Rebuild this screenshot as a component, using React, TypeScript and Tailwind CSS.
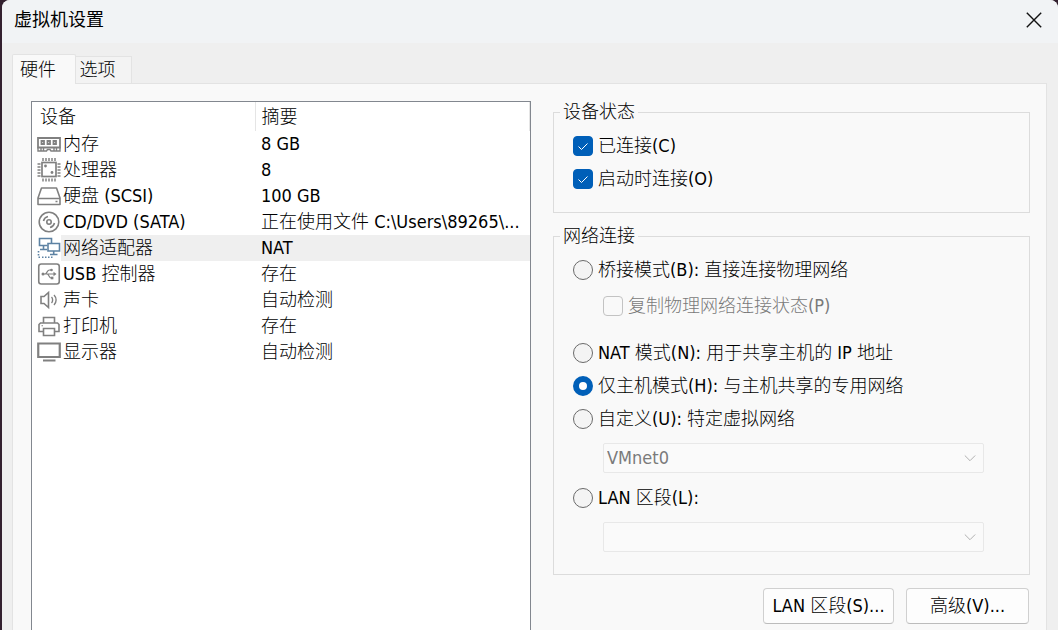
import {useState, type ReactNode} from 'react';

type IconProps = {children: ReactNode; color?: string};

function DeviceIcon({children, color = '#808080'}: IconProps) {
  return (
    <svg
      className="w-6 h-[26px] shrink-0"
      viewBox="0 0 24 26"
      fill="none"
      stroke={color}
      strokeWidth="1.6"
      aria-hidden="true"
    >
      {children}
    </svg>
  );
}

const icons = {
  memory: (
    <DeviceIcon>
      <path d="M1 7h22v9.5H1z" strokeWidth="1.8" />
      <path d="M4.500 10h2.500v3H4.500zM10.5 10h2.500v3h-2.500zM16.500 10h2.500v3h-2.500z" strokeWidth="1.8" />
      <path d="M1 16.500v3.500h8.5l1-1.5h2.5l1 1.5h9v-3.500M4 17v2.500M6.5 17v2.500M17 17v2.500M19.5 17v2.500" strokeWidth="1.4" />
    </DeviceIcon>
  ),
  cpu: (
    <DeviceIcon>
      <rect x="5" y="5.5" width="14" height="14" strokeWidth="1.7" />
      <path
        d="M6 1v3M9 1v3M12 1v3M15 1v3M18 1v3M6 21.5v3M9 21.5v3M12 21.5v3M15 21.5v3M18 21.5v3M0.5 7h3M0.5 10h3M0.5 13h3M0.5 16h3M0.5 19h3M20.5 7h3M20.5 10h3M20.5 13h3M20.5 16h3M20.5 19h3"
        strokeWidth="1.500"
      />
      <circle cx="8.5" cy="9" r="1.4" fill="#808080" stroke="none" />
      <circle cx="15" cy="15.5" r="1.4" fill="#808080" stroke="none" />
    </DeviceIcon>
  ),
  disk: (
    <DeviceIcon>
      <path d="M4.5 5h15L23 15v6.500H1V15z" strokeLinejoin="round" />
      <path d="M1 15.500h22" />
      <path d="M18.500 18.500h2" />
    </DeviceIcon>
  ),
  cd: (
    <DeviceIcon>
      <circle cx="12" cy="13" r="9.8" />
      <circle cx="12" cy="13" r="2.200" strokeWidth="1.6" />
      <path d="M6.500 12a6 6 0 0 1 4.500-4.500M17.500 14a6 6 0 0 1-4.500 4.500" strokeWidth="1.6" />
    </DeviceIcon>
  ),
  network: (
    <DeviceIcon color="#5d82a3">
      <path d="M10.500 10.500h-8v-7h12v5M6.500 10.500v3.500M3 14.500h7" />
      <path d="M11 8.500h11.500v7.500H11zM16.700 16v3M13 19.500h7.500" />
      <path d="M1.500 16v1.500M1.500 19v1.500M1.500 22.250h1.500M5 22.250h1.500M8 22.250h1.500M11 22.250h1.500M14 22.250h1.500" />
    </DeviceIcon>
  ),
  usb: (
    <DeviceIcon>
      <rect x="1.750" y="3" width="20.500" height="20" rx="2.500" />
      <path d="M5 13h12.500M8 13c2 0 2-4 4.500-4h1.500M10 13c2 0 2 4 4 4h1" strokeWidth="1.2" />
      <circle cx="6" cy="13" r="1.500" fill="#808080" stroke="none" />
      <path d="M16.500 10.800v4.400l3-2.200z" fill="#808080" stroke="none" />
      <circle cx="14.500" cy="9" r="1.300" fill="#808080" stroke="none" />
      <path d="M13.800 15.700h2.600v2.600h-2.600z" fill="#808080" stroke="none" />
    </DeviceIcon>
  ),
  sound: (
    <DeviceIcon>
      <path d="M4 9.500h3l4.500-4v15l-4.500-4H4z" />
      <path d="M14.500 10c1.500 1.500 1.500 4.500 0 6M17 8c2.800 2.800 2.800 7.200 0 10" strokeWidth="1.4" />
    </DeviceIcon>
  ),
  printer: (
    <DeviceIcon>
      <path d="M6.500 10V4.500h11V10" />
      <path d="M6 18.500H2v-7l1.500-1.500h17l1.500 1.500v7h-4" />
      <path d="M6.500 15.500h11V22.500h-11z" />
      <path d="M4.500 12.750h1.500" strokeWidth="1.200" />
    </DeviceIcon>
  ),
  display: (
    <DeviceIcon>
      <path d="M1.250 4.500h21.500v13.500H1.250z" strokeWidth="2.200" />
      <path d="M6 21.500h12.500" strokeWidth="2" />
    </DeviceIcon>
  ),
};

const devices = [
  {icon: icons.memory, name: '内存', summary: '8 GB'},
  {icon: icons.cpu, name: '处理器', summary: '8'},
  {icon: icons.disk, name: '硬盘 (SCSI)', summary: '100 GB'},
  {icon: icons.cd, name: 'CD/DVD (SATA)', summary: '正在使用文件 C:\\Users\\89265\\...'},
  {icon: icons.network, name: '网络适配器', summary: 'NAT'},
  {icon: icons.usb, name: 'USB 控制器', summary: '存在'},
  {icon: icons.sound, name: '声卡', summary: '自动检测'},
  {icon: icons.printer, name: '打印机', summary: '存在'},
  {icon: icons.display, name: '显示器', summary: '自动检测'},
];

function DeviceTable() {
  const [selected, setSelected] = useState('网络适配器');
  return (
    <div className="bg-white border border-[#82878f] border-b-0 min-w-0">
      <table className="w-full table-fixed border-collapse text-left">
        <colgroup>
          <col className="w-[223px]" />
          <col />
        </colgroup>
        <thead>
          <tr className="h-[29px]">
            <th className="p-0 pl-2 font-light border-r border-[#e5e5e5]">设备</th>
            <th className="p-0 pl-[6px] font-light border-r border-[#e5e5e5]">摘要</th>
          </tr>
        </thead>
        <tbody>
          {devices.map((device) => {
            const tint = device.name === selected ? 'bg-[#efefef]' : '';
            return (
              <tr key={device.name} onClick={() => setSelected(device.name)}>
                <td className="p-0">
                  <div className="flex pl-[5px]">
                    {device.icon}
                    <span className={`flex-1 pl-[2px] leading-[26px] whitespace-nowrap ${tint}`}>
                      {device.name}
                    </span>
                  </div>
                </td>
                <td className={`p-0 pl-[6px] leading-[26px] whitespace-nowrap ${tint}`}>
                  {device.summary}
                </td>
              </tr>
            );
          })}
        </tbody>
      </table>
    </div>
  );
}

type CheckProps = {
  label: string;
  checked: boolean;
  disabled?: boolean;
  onChange?: (checked: boolean) => void;
};

function Check({label, checked, disabled, onChange}: CheckProps) {
  return (
    <label className={`flex items-center gap-[5px] h-[33px] ${disabled ? 'text-[#7a7a7a]' : ''}`}>
      <span className="relative size-5 shrink-0">
        <input
          type="checkbox"
          className="block appearance-none size-5 rounded border border-[#858585] checked:bg-[#005fb8] checked:border-[#005fb8] disabled:border-[#c3c3c3]"
          checked={checked}
          disabled={disabled}
          onChange={(e) => onChange?.(e.target.checked)}
        />
        {checked && (
          <svg
            className="absolute inset-0 size-5 pointer-events-none"
            viewBox="0 0 20 20"
            fill="none"
            stroke="#fff"
            aria-hidden="true"
          >
            <path d="M5.500 10.500l3 3 6-6" />
          </svg>
        )}
      </span>
      {label}
    </label>
  );
}

type ModeProps = {
  value: string;
  label: string;
  mode: string;
  onSelect: (value: string) => void;
};

function Mode({value, label, mode, onSelect}: ModeProps) {
  return (
    <label className="flex items-center gap-[5px] h-[33px] whitespace-nowrap">
      <input
        type="radio"
        name="mode"
        className="appearance-none size-5 shrink-0 rounded-full border border-[#6a6a6a] bg-[#f4f4f4] checked:border-[6px] checked:border-[#005fb8] checked:bg-white"
        checked={mode === value}
        onChange={() => onSelect(value)}
      />
      {label}
    </label>
  );
}

function Combo({label, option}: {label: string; option: string}) {
  return (
    <div className="relative ml-[30px] mr-[25px]">
      <select
        aria-label={label}
        disabled
        className="block appearance-none w-full h-[30px] pl-[3px] border border-[#e8e8e8] rounded-xs bg-[#fafafa] text-[#7a7a7a] opacity-100"
      >
        <option>{option}</option>
      </select>
      <svg
        className="absolute right-2 top-[9px] w-3 h-3 pointer-events-none"
        viewBox="0 0 12 12"
        fill="none"
        stroke="#b0b0b0"
        aria-hidden="true"
      >
        <path d="M0.800 3.500L6 8.700l5.200-5.200" />
      </svg>
    </div>
  );
}

function Group({title, children}: {title: string; children: ReactNode}) {
  return (
    <fieldset className="min-w-0 border border-[#dcdcdc] pl-[19px] pr-5">
      <legend className="-ml-[13px] px-[3px] leading-6">{title}</legend>
      {children}
    </fieldset>
  );
}

function App() {
  const [connected, setConnected] = useState(true);
  const [atStart, setAtStart] = useState(true);
  const [mode, setMode] = useState('host');

  return (
    <div className="h-screen overflow-hidden bg-[#33202f] pl-[2px] text-black text-lg leading-6 font-light font-['DejaVu_Sans_Condensed','Noto_Sans_CJK_SC',sans-serif]">
      <div className="h-full flex flex-col bg-[#efefef] rounded-t-lg overflow-hidden">
        <header className="h-[43px] shrink-0 flex items-center justify-between bg-[#f1f3f5] pl-3 pr-4 pb-1">
          <h1 className="font-normal">虚拟机设置</h1>
          <button type="button" aria-label="关闭">
            <svg className="size-4" viewBox="0 0 16 16" stroke="#111" strokeWidth="1.4" aria-hidden="true">
              <path d="M0.800 0.800l14.400 14.400M15.200 0.800L0.800 15.200" />
            </svg>
          </button>
        </header>

        <div className="flex-1 min-h-0 flex flex-col pl-[10px] pr-[11px] pt-[11px]">
          <div role="tablist" className="flex items-end">
            <button
              type="button"
              role="tab"
              aria-selected="true"
              className="relative -mb-px w-16 h-[30px] pr-3 border border-b-0 border-[#e3e3e3] bg-[#f9f9f9] rounded-t-xs"
            >
              硬件
            </button>
            <button
              type="button"
              role="tab"
              aria-selected="false"
              className="-ml-px w-[57px] h-[27px] pr-3 border border-b-0 border-[#e3e3e3] bg-[#f3f3f3]"
            >
              选项
            </button>
          </div>

          <main className="flex-1 min-h-0 grid grid-cols-[500fr_477fr] gap-[22px] pt-[17px] pl-[18px] pr-4 border border-b-0 border-[#e3e3e3] bg-[#f9f9f9]">
            <DeviceTable />

            <div className="flex flex-col gap-[11px] -mt-px">
              <Group title="设备状态">
                <div className="pt-[5px] pb-[17px]">
                  <Check label="已连接(C)" checked={connected} onChange={setConnected} />
                  <Check label="启动时连接(O)" checked={atStart} onChange={setAtStart} />
                </div>
              </Group>

              <Group title="网络连接">
                <div className="pt-[5px] pb-[22px]">
                  <Mode value="bridge" label="桥接模式(B): 直接连接物理网络" mode={mode} onSelect={setMode} />
                  <div className="ml-[30px] pt-[3px] pb-[14px]">
                    <Check label="复制物理网络连接状态(P)" checked={false} disabled />
                  </div>
                  <Mode value="nat" label="NAT 模式(N): 用于共享主机的 IP 地址" mode={mode} onSelect={setMode} />
                  <Mode value="host" label="仅主机模式(H): 与主机共享的专用网络" mode={mode} onSelect={setMode} />
                  <Mode value="custom" label="自定义(U): 特定虚拟网络" mode={mode} onSelect={setMode} />
                  <div className="pt-2 pb-2">
                    <Combo label="虚拟网络" option="VMnet0" />
                  </div>
                  <Mode value="lan" label="LAN 区段(L):" mode={mode} onSelect={setMode} />
                  <div className="pt-2">
                    <Combo label="LAN 区段" option="" />
                  </div>
                </div>
              </Group>

              <div className="flex justify-end gap-3 pt-[2px] pr-px">
                <button
                  type="button"
                  className="w-[131px] h-9 border border-[#d0d0d0] border-b-[#bcbcbc] rounded bg-[#fdfdfd] whitespace-nowrap"
                >
                  LAN 区段(S)...
                </button>
                <button
                  type="button"
                  className="w-[123px] h-9 border border-[#d0d0d0] border-b-[#bcbcbc] rounded bg-[#fdfdfd] whitespace-nowrap"
                >
                  高级(V)...
                </button>
              </div>
            </div>
          </main>
        </div>
      </div>
    </div>
  );
}

export default App;
